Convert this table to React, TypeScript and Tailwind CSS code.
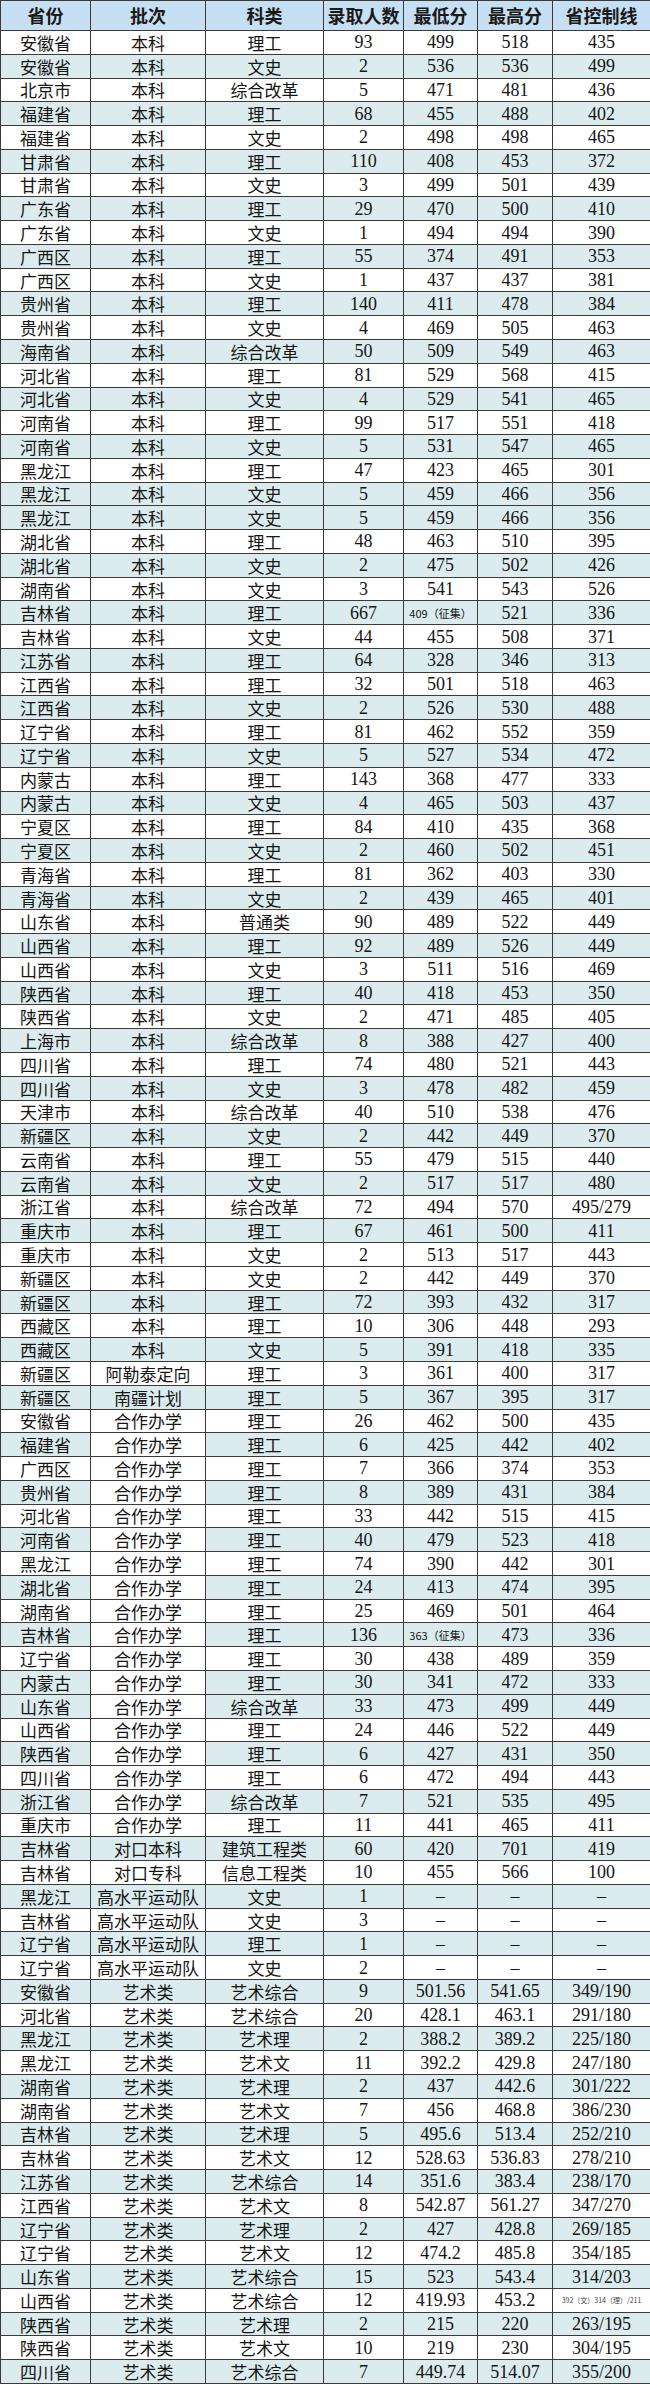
import React from "react";

type Row = [string, string, string, string, string, string, string];

const rows: Row[] = [
  ["安徽省", "本科", "理工", "93", "499", "518", "435"],
  ["安徽省", "本科", "文史", "2", "536", "536", "499"],
  ["北京市", "本科", "综合改革", "5", "471", "481", "436"],
  ["福建省", "本科", "理工", "68", "455", "488", "402"],
  ["福建省", "本科", "文史", "2", "498", "498", "465"],
  ["甘肃省", "本科", "理工", "110", "408", "453", "372"],
  ["甘肃省", "本科", "文史", "3", "499", "501", "439"],
  ["广东省", "本科", "理工", "29", "470", "500", "410"],
  ["广东省", "本科", "文史", "1", "494", "494", "390"],
  ["广西区", "本科", "理工", "55", "374", "491", "353"],
  ["广西区", "本科", "文史", "1", "437", "437", "381"],
  ["贵州省", "本科", "理工", "140", "411", "478", "384"],
  ["贵州省", "本科", "文史", "4", "469", "505", "463"],
  ["海南省", "本科", "综合改革", "50", "509", "549", "463"],
  ["河北省", "本科", "理工", "81", "529", "568", "415"],
  ["河北省", "本科", "文史", "4", "529", "541", "465"],
  ["河南省", "本科", "理工", "99", "517", "551", "418"],
  ["河南省", "本科", "文史", "5", "531", "547", "465"],
  ["黑龙江", "本科", "理工", "47", "423", "465", "301"],
  ["黑龙江", "本科", "文史", "5", "459", "466", "356"],
  ["黑龙江", "本科", "文史", "5", "459", "466", "356"],
  ["湖北省", "本科", "理工", "48", "463", "510", "395"],
  ["湖北省", "本科", "文史", "2", "475", "502", "426"],
  ["湖南省", "本科", "文史", "3", "541", "543", "526"],
  ["吉林省", "本科", "理工", "667", "409（征集）", "521", "336"],
  ["吉林省", "本科", "文史", "44", "455", "508", "371"],
  ["江苏省", "本科", "理工", "64", "328", "346", "313"],
  ["江西省", "本科", "理工", "32", "501", "518", "463"],
  ["江西省", "本科", "文史", "2", "526", "530", "488"],
  ["辽宁省", "本科", "理工", "81", "462", "552", "359"],
  ["辽宁省", "本科", "文史", "5", "527", "534", "472"],
  ["内蒙古", "本科", "理工", "143", "368", "477", "333"],
  ["内蒙古", "本科", "文史", "4", "465", "503", "437"],
  ["宁夏区", "本科", "理工", "84", "410", "435", "368"],
  ["宁夏区", "本科", "文史", "2", "460", "502", "451"],
  ["青海省", "本科", "理工", "81", "362", "403", "330"],
  ["青海省", "本科", "文史", "2", "439", "465", "401"],
  ["山东省", "本科", "普通类", "90", "489", "522", "449"],
  ["山西省", "本科", "理工", "92", "489", "526", "449"],
  ["山西省", "本科", "文史", "3", "511", "516", "469"],
  ["陕西省", "本科", "理工", "40", "418", "453", "350"],
  ["陕西省", "本科", "文史", "2", "471", "485", "405"],
  ["上海市", "本科", "综合改革", "8", "388", "427", "400"],
  ["四川省", "本科", "理工", "74", "480", "521", "443"],
  ["四川省", "本科", "文史", "3", "478", "482", "459"],
  ["天津市", "本科", "综合改革", "40", "510", "538", "476"],
  ["新疆区", "本科", "文史", "2", "442", "449", "370"],
  ["云南省", "本科", "理工", "55", "479", "515", "440"],
  ["云南省", "本科", "文史", "2", "517", "517", "480"],
  ["浙江省", "本科", "综合改革", "72", "494", "570", "495/279"],
  ["重庆市", "本科", "理工", "67", "461", "500", "411"],
  ["重庆市", "本科", "文史", "2", "513", "517", "443"],
  ["新疆区", "本科", "文史", "2", "442", "449", "370"],
  ["新疆区", "本科", "理工", "72", "393", "432", "317"],
  ["西藏区", "本科", "理工", "10", "306", "448", "293"],
  ["西藏区", "本科", "文史", "5", "391", "418", "335"],
  ["新疆区", "阿勒泰定向", "理工", "3", "361", "400", "317"],
  ["新疆区", "南疆计划", "理工", "5", "367", "395", "317"],
  ["安徽省", "合作办学", "理工", "26", "462", "500", "435"],
  ["福建省", "合作办学", "理工", "6", "425", "442", "402"],
  ["广西区", "合作办学", "理工", "7", "366", "374", "353"],
  ["贵州省", "合作办学", "理工", "8", "389", "431", "384"],
  ["河北省", "合作办学", "理工", "33", "442", "515", "415"],
  ["河南省", "合作办学", "理工", "40", "479", "523", "418"],
  ["黑龙江", "合作办学", "理工", "74", "390", "442", "301"],
  ["湖北省", "合作办学", "理工", "24", "413", "474", "395"],
  ["湖南省", "合作办学", "理工", "25", "469", "501", "464"],
  ["吉林省", "合作办学", "理工", "136", "363（征集）", "473", "336"],
  ["辽宁省", "合作办学", "理工", "30", "438", "489", "359"],
  ["内蒙古", "合作办学", "理工", "30", "341", "472", "333"],
  ["山东省", "合作办学", "综合改革", "33", "473", "499", "449"],
  ["山西省", "合作办学", "理工", "24", "446", "522", "449"],
  ["陕西省", "合作办学", "理工", "6", "427", "431", "350"],
  ["四川省", "合作办学", "理工", "6", "472", "494", "443"],
  ["浙江省", "合作办学", "综合改革", "7", "521", "535", "495"],
  ["重庆市", "合作办学", "理工", "11", "441", "465", "411"],
  ["吉林省", "对口本科", "建筑工程类", "60", "420", "701", "419"],
  ["吉林省", "对口专科", "信息工程类", "10", "455", "566", "100"],
  ["黑龙江", "高水平运动队", "文史", "1", "-", "-", "-"],
  ["吉林省", "高水平运动队", "文史", "3", "-", "-", "-"],
  ["辽宁省", "高水平运动队", "理工", "1", "-", "-", "-"],
  ["辽宁省", "高水平运动队", "文史", "2", "-", "-", "-"],
  ["安徽省", "艺术类", "艺术综合", "9", "501.56", "541.65", "349/190"],
  ["河北省", "艺术类", "艺术综合", "20", "428.1", "463.1", "291/180"],
  ["黑龙江", "艺术类", "艺术理", "2", "388.2", "389.2", "225/180"],
  ["黑龙江", "艺术类", "艺术文", "11", "392.2", "429.8", "247/180"],
  ["湖南省", "艺术类", "艺术理", "2", "437", "442.6", "301/222"],
  ["湖南省", "艺术类", "艺术文", "7", "456", "468.8", "386/230"],
  ["吉林省", "艺术类", "艺术理", "5", "495.6", "513.4", "252/210"],
  ["吉林省", "艺术类", "艺术文", "12", "528.63", "536.83", "278/210"],
  ["江苏省", "艺术类", "艺术综合", "14", "351.6", "383.4", "238/170"],
  ["江西省", "艺术类", "艺术文", "8", "542.87", "561.27", "347/270"],
  ["辽宁省", "艺术类", "艺术理", "2", "427", "428.8", "269/185"],
  ["辽宁省", "艺术类", "艺术文", "12", "474.2", "485.8", "354/185"],
  ["山东省", "艺术类", "艺术综合", "15", "523", "543.4", "314/203"],
  ["山西省", "艺术类", "艺术综合", "12", "419.93", "453.2", "392（文）314（理）/211"],
  ["陕西省", "艺术类", "艺术理", "2", "215", "220", "263/195"],
  ["陕西省", "艺术类", "艺术文", "10", "219", "230", "304/195"],
  ["四川省", "艺术类", "艺术综合", "7", "449.74", "514.07", "355/200"],
];

const headers = ["省份", "批次", "科类", "录取人数", "最低分", "最高分", "省控制线"];

function isShaded(i: number): boolean {
  const n = i + 1;
  if (n <= 20) return n % 2 === 0;
  if (n === 21) return true;
  if (n <= 52) return n % 2 === 1;
  if (n <= 70) return n % 2 === 0;
  return n % 2 === 1;
}

function cellText(col: number, text: string) {
  if (text.includes("（征集）")) {
    return <span className="text-[11px] font-['Noto_Sans_CJK_SC',sans-serif]">{text}</span>;
  }
  if (text.includes("（文）")) {
    return <span className="text-[7px] leading-none font-['Noto_Sans_CJK_SC',sans-serif] text-[#444]">{text}</span>;
  }
  if (col >= 3) {
    return <span className="text-[18px] leading-none font-['Liberation_Serif','DejaVu_Serif',serif]">{text === "-" ? "–" : text}</span>;
  }
  return <span className="text-[17px] leading-none font-['Noto_Sans_CJK_SC',sans-serif]">{text}</span>;
}

export default function App() {
  return (
    <div className="w-[650px] h-[2384px] bg-white overflow-hidden">
      <div className="grid h-[2384px] w-[650px] grid-cols-[90px_115px_118px_80px_74px_75px_98px] grid-rows-[30px_repeat(99,minmax(0,1fr))] border-l border-t border-[#3a3a3a] text-[#151515]">
        {headers.map((h) => (
          <div
            key={h}
            className="flex items-center justify-center border-r border-b border-[#3a3a3a] bg-[#c7dff2] text-[18px] font-bold font-['Noto_Sans_CJK_SC',sans-serif] text-[#1a1a1a]"
          >
            {h}
          </div>
        ))}
        {rows.map((r, i) => {
          const shaded = isShaded(i);
          const batchWhite = r[1] === "合作办学";
          return r.map((c, j) => (
            <div
              key={`${i}-${j}`}
              className={`flex items-center justify-center whitespace-nowrap border-r border-b border-[#3a3a3a] ${
                shaded && !(j === 1 && batchWhite) ? "bg-[#dcecee]" : "bg-white"
              }`}
            >
              {cellText(j, c)}
            </div>
          ));
        })}
      </div>
    </div>
  );
}
